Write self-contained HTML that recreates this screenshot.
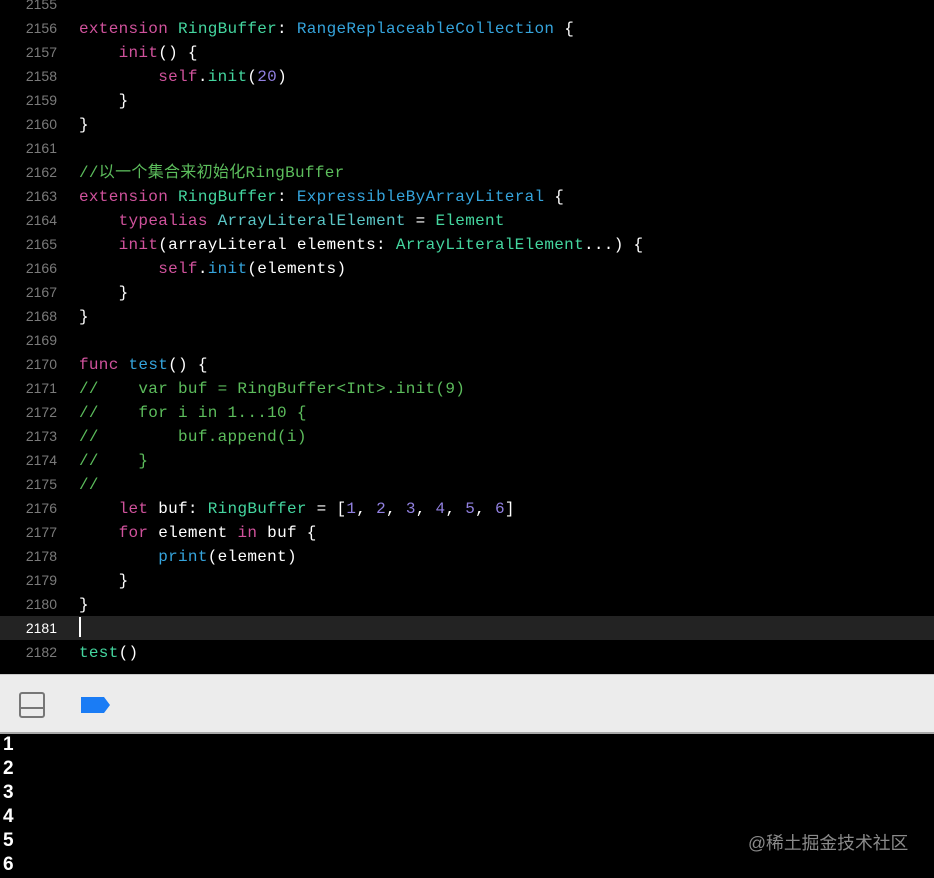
<!DOCTYPE html><html><head><meta charset="utf-8"><style>
body{margin:0;width:934px;height:878px;background:#000;overflow:hidden;position:relative}
.code{position:absolute;left:0;top:-8px;width:934px;font:16px/24px "Liberation Mono","Noto Sans CJK SC",monospace;letter-spacing:0.3px;color:#fff}
.l{height:24px;white-space:pre;position:relative}
.n{display:inline-block;width:57px;text-align:right;color:#7a7a7a;font-family:"Liberation Sans",sans-serif;font-size:14px;margin-right:22px;letter-spacing:0}
.cur{background:#232323}.cur .n{color:#fff}
.k{color:#d0529c}.g{color:#44d69f}.b{color:#35a4dc}.c{color:#5cbd5c}.p{color:#9180e0}.t{color:#5bc6c6}
.bar{position:absolute;left:0;top:674px;width:934px;height:57px;background:#ececec;border-top:1px solid #c8c8c8;border-bottom:2px solid #a8a8a8}
.out{position:absolute;left:3px;top:733px;font:bold 19px/24px "Liberation Sans",sans-serif;color:#fff}
.wm{position:absolute;left:748px;top:829px;font:17.8px "Liberation Sans","Noto Sans CJK SC",sans-serif;color:#8a8a8a}
</style></head><body>
<div class="code">
<div class="l"><span class="n">2155</span></div>
<div class="l"><span class="n">2156</span><span class="k">extension</span> <span class="g">RingBuffer</span>: <span class="b">RangeReplaceableCollection</span> {</div>
<div class="l"><span class="n">2157</span>    <span class="k">init</span>() {</div>
<div class="l"><span class="n">2158</span>        <span class="k">self</span>.<span class="g">init</span>(<span class="p">20</span>)</div>
<div class="l"><span class="n">2159</span>    }</div>
<div class="l"><span class="n">2160</span>}</div>
<div class="l"><span class="n">2161</span></div>
<div class="l"><span class="n">2162</span><span class="c">//以一个集合来初始化RingBuffer</span></div>
<div class="l"><span class="n">2163</span><span class="k">extension</span> <span class="g">RingBuffer</span>: <span class="b">ExpressibleByArrayLiteral</span> {</div>
<div class="l"><span class="n">2164</span>    <span class="k">typealias</span> <span class="t">ArrayLiteralElement</span> = <span class="g">Element</span></div>
<div class="l"><span class="n">2165</span>    <span class="k">init</span>(arrayLiteral elements: <span class="g">ArrayLiteralElement</span>...) {</div>
<div class="l"><span class="n">2166</span>        <span class="k">self</span>.<span class="b">init</span>(elements)</div>
<div class="l"><span class="n">2167</span>    }</div>
<div class="l"><span class="n">2168</span>}</div>
<div class="l"><span class="n">2169</span></div>
<div class="l"><span class="n">2170</span><span class="k">func</span> <span class="b">test</span>() {</div>
<div class="l"><span class="n">2171</span><span class="c">//    var buf = RingBuffer&lt;Int&gt;.init(9)</span></div>
<div class="l"><span class="n">2172</span><span class="c">//    for i in 1...10 {</span></div>
<div class="l"><span class="n">2173</span><span class="c">//        buf.append(i)</span></div>
<div class="l"><span class="n">2174</span><span class="c">//    }</span></div>
<div class="l"><span class="n">2175</span><span class="c">//</span></div>
<div class="l"><span class="n">2176</span>    <span class="k">let</span> buf: <span class="g">RingBuffer</span> = [<span class="p">1</span>, <span class="p">2</span>, <span class="p">3</span>, <span class="p">4</span>, <span class="p">5</span>, <span class="p">6</span>]</div>
<div class="l"><span class="n">2177</span>    <span class="k">for</span> element <span class="k">in</span> buf {</div>
<div class="l"><span class="n">2178</span>        <span class="b">print</span>(element)</div>
<div class="l"><span class="n">2179</span>    }</div>
<div class="l"><span class="n">2180</span>}</div>
<div class="l cur"><span class="n">2181</span><span style="display:inline-block;width:2px;height:20px;background:#fff;vertical-align:-4px"></span></div>
<div class="l"><span class="n">2182</span><span class="g">test</span>()</div>
</div>
<div class="bar">
<svg width="934" height="57" style="position:absolute;left:0;top:0">
<rect x="20" y="18" width="24" height="24" rx="2" fill="none" stroke="#777" stroke-width="2"/>
<line x1="20" y1="33" x2="44" y2="33" stroke="#777" stroke-width="2"/>
<path d="M81 22 H104 L110 30 L104 38 H81 Z" fill="#1a7cf5"/>
</svg>
</div>
<div class="out">1<br>2<br>3<br>4<br>5<br>6</div>
<div class="wm">@稀土掘金技术社区</div>
</body></html>
